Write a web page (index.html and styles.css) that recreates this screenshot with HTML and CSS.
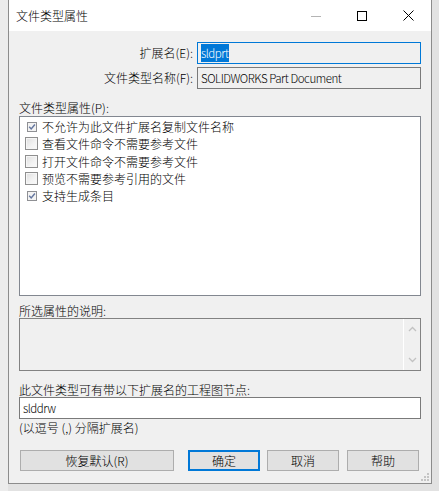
FILE: index.html
```html
<!DOCTYPE html>
<html lang="zh-CN">
<head>
<meta charset="utf-8">
<title>文件类型属性</title>
<link rel="stylesheet" href="styles.css">
</head>
<body>
<div class="desk">
  <div class="window">
    <div class="titlebar">
      <span class="title">文件类型属性</span>
      <div class="caption">
        <span class="cap-btn">
          <svg width="10" height="10" viewBox="0 0 10 10"><path d="M0 5.5 H10" stroke="#b4b4b4" stroke-width="1"/></svg>
        </span>
        <span class="cap-btn">
          <svg width="10" height="10" viewBox="0 0 10 10"><rect x="0.5" y="0.5" width="9" height="9" fill="none" stroke="#000" stroke-width="1"/></svg>
        </span>
        <span class="cap-btn">
          <svg width="11" height="11" viewBox="0 0 11 11"><path d="M0.5 0.5 L10.5 10.5 M10.5 0.5 L0.5 10.5" stroke="#000" stroke-width="1"/></svg>
        </span>
      </div>
    </div>
    <div class="content">
      <div class="field-grid">
        <label class="field-label">扩展名(E):</label>
        <div class="input focus"><span class="sel lat">sldprt</span></div>
        <label class="field-label">文件类型名称(F):</label>
        <div class="input readonly"><span class="lat">SOLIDWORKS Part Document</span></div>
      </div>

      <div class="group-label">文件类型属性(P):</div>
      <div class="listbox">
        <div class="item">
          <span class="chk"><svg class="chk-on" width="10" height="10" viewBox="0 0 10 10"><rect x="0.5" y="0.5" width="9" height="9" fill="#f3f3f3" stroke="#8f9094"/><path d="M2.2 4.8 L4.2 6.9 L7.9 2.6" fill="none" stroke="#6577a0" stroke-width="1.5"/></svg></span>
          <span class="item-text">不允许为此文件扩展名复制文件名称</span>
        </div>
        <div class="item">
          <span class="chk"><span class="chk-off"></span></span>
          <span class="item-text">查看文件命令不需要参考文件</span>
        </div>
        <div class="item">
          <span class="chk"><span class="chk-off"></span></span>
          <span class="item-text">打开文件命令不需要参考文件</span>
        </div>
        <div class="item">
          <span class="chk"><span class="chk-off"></span></span>
          <span class="item-text">预览不需要参考引用的文件</span>
        </div>
        <div class="item">
          <span class="chk"><svg class="chk-on" width="10" height="10" viewBox="0 0 10 10"><rect x="0.5" y="0.5" width="9" height="9" fill="#f3f3f3" stroke="#8f9094"/><path d="M2.2 4.8 L4.2 6.9 L7.9 2.6" fill="none" stroke="#6577a0" stroke-width="1.5"/></svg></span>
          <span class="item-text">支持生成条目</span>
        </div>
      </div>

      <div class="desc-label">所选属性的说明:</div>
      <div class="desc-box">
        <div class="desc-text"></div>
        <div class="scrollbar">
          <svg width="9" height="6" viewBox="0 0 9 6"><path d="M1 5 L4.5 1.5 L8 5" fill="none" stroke="#c2c2c2" stroke-width="1.3"/></svg>
          <svg width="9" height="6" viewBox="0 0 9 6"><path d="M1 1 L4.5 4.5 L8 1" fill="none" stroke="#c2c2c2" stroke-width="1.3"/></svg>
        </div>
      </div>

      <div class="nodes-label">此文件类型可有带以下扩展名的工程图节点:</div>
      <div class="input white"><span class="lat">slddrw</span></div>
      <div class="hint">(以逗号 (,) 分隔扩展名)</div>

      <div class="buttons">
        <button class="btn btn-wide">恢复默认(R)</button>
        <button class="btn btn-default">确定</button>
        <button class="btn btn-cancel">取消</button>
        <button class="btn btn-help">帮助</button>
      </div>
      <svg class="grip" width="9" height="8" viewBox="0 0 9 8">
        <rect x="6" y="0" width="2" height="2" fill="#c4c4c4"/>
        <rect x="3" y="3" width="2" height="2" fill="#c4c4c4"/>
        <rect x="6" y="3" width="2" height="2" fill="#c4c4c4"/>
        <rect x="0" y="6" width="2" height="2" fill="#c4c4c4"/>
        <rect x="3" y="6" width="2" height="2" fill="#c4c4c4"/>
        <rect x="6" y="6" width="2" height="2" fill="#c4c4c4"/>
      </svg>
    </div>
  </div>
</div>
</body>
</html>
```

FILE: styles.css
```css
* { box-sizing: border-box; }

html, body {
  margin: 0;
  padding: 0;
}

body {
  width: 439px;
  height: 491px;
  overflow: hidden;
  background: #e2e2e2;
  font-family: "Noto Sans CJK SC", "Noto Sans", sans-serif;
  font-size: 12px;
  font-weight: 300;
  color: #000;
}

.lat {
  font-size: 11.5px;
  letter-spacing: -0.45px;
  font-weight: 300;
}

.desk {
  padding-left: 8px;
  height: 491px;
  background: linear-gradient(to right, #ececec 0, #ececec 8px, #e2e2e2 8px);
}

.window {
  position: relative;
  width: 424px;
  height: 484px;
  border: 1px solid #8c8c8c;
  border-top: none;
  background: #f0f0f0;
  display: flex;
  flex-direction: column;
}

.titlebar {
  height: 31px;
  background: #fff;
  display: flex;
  align-items: center;
  justify-content: space-between;
  padding-left: 7px;
}

.title {
  font-size: 12px;
  line-height: 16px;
}

.caption {
  display: flex;
  height: 31px;
}

.cap-btn {
  width: 46px;
  height: 31px;
  display: flex;
  align-items: center;
  justify-content: center;
}

.content {
  position: relative;
  flex: 1;
  padding: 11px 10px 0 10px;
  display: flex;
  flex-direction: column;
}

.field-grid {
  display: grid;
  grid-template-columns: 1fr 224px;
  column-gap: 4px;
  row-gap: 3px;
}

.field-label {
  text-align: right;
  line-height: 22px;
  white-space: nowrap;
}

.input {
  height: 22px;
  border: 1px solid #7a7a7a;
  line-height: 18px;
  padding: 1px 3px 0 3px;
  white-space: nowrap;
  overflow: hidden;
}

.input.focus {
  border-color: #0078d7;
  background: #f0f0f0;
}

.input.readonly {
  background: #f0f0f0;
}

.input.white {
  background: #fff;
}

.sel {
  background: #0078d7;
  color: #fff;
  padding: 1px 0;
}

.group-label {
  margin-top: 11px;
  line-height: 15px;
}

.listbox {
  margin-top: 1px;
  height: 180px;
  border: 1px solid #828790;
  background: #fff;
  padding-top: 1px;
}

.item {
  display: flex;
  align-items: center;
  height: 17.3px;
  padding-left: 5px;
}

.chk {
  width: 13px;
  height: 13px;
  display: flex;
  align-items: center;
  justify-content: flex-end;
  margin-right: 4px;
}

.chk-on {
  display: block;
  margin-right: 1px;
}

.chk-off {
  display: block;
  width: 13px;
  height: 13px;
  border: 1px solid #8f8f8f;
  background: linear-gradient(135deg, #dedede 0%, #f3f3f3 60%, #fafafa 100%);
  box-shadow: inset 0 0 0 1px #f6f6f6;
}

.item-text {
  line-height: 17px;
  white-space: nowrap;
}

.desc-label {
  margin-top: 8px;
  line-height: 14px;
}

.desc-box {
  height: 53px;
  border: 1px solid #828282;
  background: #f0f0f0;
  display: flex;
}

.desc-text {
  flex: 1;
}

.scrollbar {
  width: 17px;
  border-left: 1px solid #ffffff;
  display: flex;
  flex-direction: column;
  justify-content: space-between;
  align-items: center;
  padding: 7px 0 7px 0;
}

.scrollbar svg {
  display: block;
}

.nodes-label {
  margin-top: 12px;
  line-height: 14px;
}

.hint {
  margin-top: 2px;
  line-height: 14px;
}

.buttons {
  margin-top: 15px;
  display: flex;
  padding-left: 1px;
}

.btn {
  height: 21px;
  border: 1px solid #adadad;
  background: #e1e1e1;
  font-family: "Noto Sans CJK SC", "Noto Sans", sans-serif;
  font-size: 12px;
  font-weight: 300;
  color: #000;
  padding: 0;
  line-height: 18px;
  margin: 0;
}

.btn-wide {
  width: 154px;
}

.btn-default {
  width: 72px;
  margin-left: 14px;
  border: 2px solid #0078d7;
}

.btn-cancel {
  width: 72px;
  margin-left: 7px;
}

.btn-help {
  width: 72px;
  margin-left: 8px;
}

.grip {
  position: absolute;
  right: 1px;
  bottom: 2px;
}
```
